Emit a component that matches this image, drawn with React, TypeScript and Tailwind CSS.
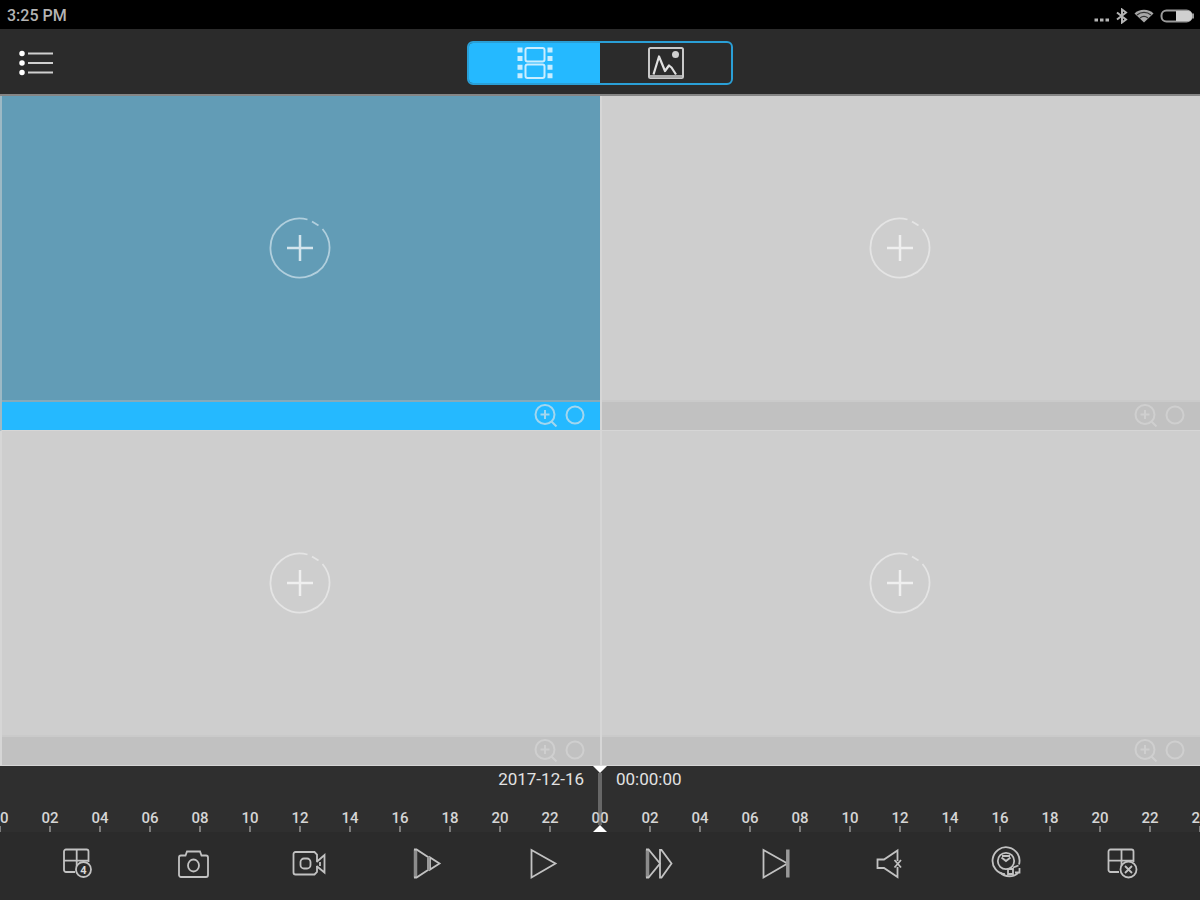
import { useState, ReactNode } from 'react';

// two days, one label every two hours, midnight in the middle
const hours = Array.from({ length: 25 }, (_, i) => (i === 24 ? '24' : String((i * 2) % 24).padStart(2, '0')));

const Glyph = ({ children }: { children: ReactNode }) => (
  <svg viewBox="0 0 40 40" className="w-10 h-10" fill="none" stroke="#c2c2c2" strokeWidth="1.8" aria-hidden="true">
    {children}
  </svg>
);

const tools: { label: string; icon: ReactNode }[] = [
  {
    label: 'Split into 4',
    icon: (
      <>
        <path d="M18 28H9a2 2 0 0 1-2-2V7.5a2 2 0 0 1 2-2h20.500a2 2 0 0 1 2 2V18M19.700 5.500V28M7.500 16.700H31" />
        <circle cx="26.5" cy="25.5" r="7.5" fill="#2b2b2b" />
        <text x="26.5" y="29.5" textAnchor="middle" fontSize="11" fontWeight="700" fill="#d8d8d8" stroke="none">4</text>
      </>
    ),
  },
  {
    label: 'Snapshot',
    icon: (
      <>
        <path d="M8 11.500h4.500l1.500-4h13l1.500 4H33a2 2 0 0 1 2 2V31a2 2 0 0 1-2 2H8a2 2 0 0 1-2-2V13.500a2 2 0 0 1 2-2z" />
        <ellipse cx="20.5" cy="21.5" rx="5.5" ry="6" />
      </>
    ),
  },
  {
    label: 'Record',
    icon: (
      <>
        <path d="M28 17.500V10.500l-2.500-2.500H6.500a2 2 0 0 0-2 2v18.500a2 2 0 0 0 2 2h19l2.500-2.500V22" />
        <rect x="11.5" y="14.5" width="10" height="10" rx="3.5" />
        <path d="M27.500 18l8-7v17.500l-8-6.500M31 18v4" />
      </>
    ),
  },
  {
    label: 'Slow playback',
    icon: (
      <>
        <path d="M9.500 5.500v28" stroke="#8c8c8c" strokeWidth="3.5" />
        <path d="M8 5.500h2.500L22 13v13l-11.500 7.500H8" />
        <path d="M24 13.500v12l9.500-6z" />
        <path d="M22.500 13v13" stroke="#999" strokeWidth="3" />
      </>
    ),
  },
  { label: 'Play', icon: <path d="M9.500 6v27.500l24-14z" /> },
  {
    label: 'Fast playback',
    icon: (
      <>
        <path d="M9.500 5.500v28" stroke="#8c8c8c" strokeWidth="3.5" />
        <path d="M8 5.500h2.500L22 19.500l-11.500 14H8" />
        <path d="M22 6v27.500h1.500l10-14L23.500 6z" />
      </>
    ),
  },
  {
    label: 'Next frame',
    icon: (
      <>
        <path d="M9.500 6v27.500l24-14z" />
        <path d="M33.800 5.500v28" stroke="#999" strokeWidth="3.5" />
      </>
    ),
  },
  {
    label: 'Mute',
    icon: (
      <>
        <path d="M27.500 17V6.500L14 15.500H7.500v8.500H14l13.500 9V23" />
        <path d="M24.500 16l6.500 7.500M31 16l-6.500 7.500" />
      </>
    ),
  },
  {
    label: 'Fisheye',
    icon: (
      <>
        <path d="M18 30.200A13.500 13.500 0 1 1 32 20.500" />
        <circle cx="19" cy="17" r="8.2" />
        <path d="M14.500 13.500l4.500 3.500 4.500-3.500M15 12h8" strokeWidth="2" />
        <path d="M13 28.500c5 5 14 5 18.500 0M26 23.500l5.500-2M32.500 24v4.500H28" />
        <path d="M21 25h5v5h-5z" fill="#2b2b2b" />
      </>
    ),
  },
  {
    label: 'Close all',
    icon: (
      <>
        <path d="M16 28H7.500a2 2 0 0 1-2-2V7.500a2 2 0 0 1 2-2h21a2 2 0 0 1 2 2V18M18.500 5.500V28M5.500 16.700H30" />
        <circle cx="25.5" cy="25.5" r="8" fill="#2b2b2b" />
        <path d="M22 22l7 7M29 22l-7 7" />
      </>
    ),
  },
];

type CameraCellProps = {
  index: number;
  selected: boolean;
  onSelect: () => void;
};

const CameraCell = ({ index, selected, onSelect }: CameraCellProps) => (
  <section
    aria-label={`Channel ${index + 1}`}
    className={`flex flex-col border-l-2 border-b ${selected ? 'bg-[#629cb6] border-l-[#9db9c5] border-b-[#d6d6d6]' : 'bg-[#cecece] border-[#d6d6d6]'}`}
  >
    <button type="button" aria-label="Add camera" onClick={onSelect} className="flex-1 pr-[2px] flex items-center justify-center">
      <svg viewBox="0 0 64 64" className={`w-16 h-16 ${selected ? 'text-[#b1cfdd]' : 'text-[#e4e4e4]'}`} fill="none" stroke="currentColor" strokeWidth="1.8" aria-hidden="true">
        <path d="M39.500 3.500A29.500 29.500 0 1 0 54.500 13M44 5.500l6.500 4" />
        <path d="M32 19v26M19 32h26" stroke={selected ? '#d4e5ed' : '#efefef'} strokeWidth="2.5" />
      </svg>
    </button>
    <div
      className={`h-[30px] border-t-2 pr-[15px] pb-[2px] flex items-center justify-end gap-[7px] ${selected ? 'bg-[#25b9ff] border-[#86aab9] text-[#a3d6ee]' : 'bg-[#c1c1c1] border-[#cacaca] text-[#cfcfcf]'}`}
    >
      <button type="button" aria-label="Zoom in">
        <svg viewBox="0 0 24 24" className="w-6 h-6" fill="none" stroke="currentColor" strokeWidth="2" aria-hidden="true">
          <circle cx="11" cy="11.5" r="9.5" />
          <path d="M17.500 18.500l5 5M11 7v9M6.500 11.500h9" />
        </svg>
      </button>
      <button type="button" aria-label="Record status">
        <svg viewBox="0 0 20 20" className="w-5 h-5" fill="none" stroke="currentColor" strokeWidth="2" aria-hidden="true">
          <circle cx="10" cy="10" r="8.5" />
        </svg>
      </button>
    </div>
  </section>
);

const StatusBar = () => (
  <div className="h-[29px] bg-black flex items-center justify-between pl-[7px] pr-[6px] pt-[2px]">
    <span className="text-[16px] leading-5 font-medium text-[#b4b4b4]">3:25 PM</span>
    <div className="flex items-center gap-[6px] text-[#b4b4b4]">
      <svg viewBox="0 0 16 16" className="w-4 h-4" fill="currentColor" aria-hidden="true">
        <path d="M.5 10.500h3.500v3H.5zM6 10.500h3.500v3H6zM11.500 10.500H15v3h-3.500z" />
      </svg>
      <svg viewBox="0 0 12 16" className="w-3 h-4" fill="none" stroke="currentColor" strokeWidth="2" aria-hidden="true">
        <path d="M1 4.500l9 7-4 3V1.500l4 3-9 7" />
      </svg>
      <svg viewBox="0 0 20 16" className="w-5 h-4" aria-hidden="true">
        <path d="M10 14.500L.5 5.500C5 .5 15 .5 19.500 5.500z" fill="#a8a8a8" />
        <path d="M3 7c4-3.500 10-3.500 14 0M6 10c2.500-2 5.500-2 8 0" stroke="#333" strokeWidth="1.2" fill="none" />
      </svg>
      <svg viewBox="0 0 34 14" className="w-[34px] h-[14px]" aria-hidden="true">
        <rect x="1.5" y="1.5" width="30" height="11" rx="5" fill="none" stroke="#9a9a9a" strokeWidth="2" />
        <path d="M16 2h12a4 4 0 0 1 4 4v2a4 4 0 0 1-4 4H16z" fill="#d0d0d0" />
        <path d="M32 4.500h2v5h-2z" fill="#9a9a9a" />
      </svg>
    </div>
  </div>
);

const App = () => {
  const [mode, setMode] = useState<'video' | 'image'>('video');
  const [selected, setSelected] = useState(0);

  return (
    <div className="min-h-screen flex flex-col bg-[#2b2b2b] font-['Roboto',sans-serif]">
      <StatusBar />

      <header className="h-[67px] pt-[3px] bg-[#2b2b2b] border-b-2 border-[#858585] grid grid-cols-[1fr_auto_1fr] items-center">
        <button type="button" aria-label="Menu" className="ml-4 justify-self-start">
          <svg viewBox="0 0 40 28" className="w-10 h-7" aria-hidden="true">
            <path d="M12 4.500h25M12 14h25M12 23.500h25" stroke="#d0d0d0" strokeWidth="2.2" />
            <path d="M6 4.500h.01M6 14h.01M6 23.500h.01" stroke="#fff" strokeWidth="5.5" strokeLinecap="round" />
          </svg>
        </button>
        <div className="flex w-[266px] h-11 rounded-md border-2 border-[#2a9fd6] overflow-hidden">
          <button
            type="button"
            aria-label="Videos"
            aria-pressed={mode === 'video'}
            onClick={() => setMode('video')}
            className={`flex-1 flex items-center justify-center ${mode === 'video' ? 'bg-[#25b9ff]' : ''}`}
          >
            <svg viewBox="0 0 36 32" className="w-9 h-8" fill="none" stroke="#c9edff" aria-hidden="true">
              <path d="M3 .5v31M33 .5v31" strokeWidth="5" strokeDasharray="5 3.600" />
              <rect x="8.5" y="1" width="19" height="13.5" rx="2" strokeWidth="2" />
              <rect x="8.5" y="17.5" width="19" height="13.5" rx="2" strokeWidth="2" />
            </svg>
          </button>
          <button
            type="button"
            aria-label="Images"
            aria-pressed={mode === 'image'}
            onClick={() => setMode('image')}
            className={`flex-1 flex items-center justify-center ${mode === 'image' ? 'bg-[#25b9ff]' : ''}`}
          >
            <svg viewBox="0 0 36 32" className="w-9 h-8" fill="none" stroke="#c8c8c8" aria-hidden="true">
              <rect x="1" y="1" width="34" height="30" rx="1.5" strokeWidth="2" />
              <path d="M2 29.500h32" strokeWidth="3" stroke="#a8a8a8" />
              <path d="M5.500 27.500L11 9.500l6 14.500 4-5.500 2.500 2 4.500 7" strokeWidth="2.2" stroke="#e0e0e0" strokeLinejoin="round" />
              <circle cx="27.5" cy="7.5" r="3.5" fill="#d0d0d0" stroke="none" />
            </svg>
          </button>
        </div>
      </header>

      <main className="flex-1 grid grid-cols-2 grid-rows-2">
        {[0, 1, 2, 3].map((i) => (
          <CameraCell key={i} index={i} selected={selected === i} onSelect={() => setSelected(i)} />
        ))}
      </main>

      <div className="relative bg-[#2f2f2f] overflow-hidden">
        <div className="grid grid-cols-2 h-11 pt-[3px] text-[17px] leading-5 text-[#e2e2e2]">
          <span className="pr-4 text-right">2017-12-16</span>
          <span className="pl-4">00:00:00</span>
        </div>
        <div className="flex justify-center">
          {[...hours.slice(0, 12), ...hours.slice(0, 12), hours[24]].map((hour, i) => (
            <div key={i} className="w-[50px] shrink-0 flex flex-col items-center">
              <span className="text-[15px] leading-4 font-medium text-[#d6d6d6]">{hour}</span>
              <span className="w-[2px] h-[6px] bg-[#7c7c7c]" />
            </div>
          ))}
        </div>
        {/* playhead */}
        <div className="absolute inset-y-0 left-1/2 -translate-x-1/2 flex flex-col items-center pointer-events-none">
          <svg viewBox="0 0 14 7" className="w-[14px] h-[7px]" aria-hidden="true">
            <path d="M0 0h14L7 7z" fill="#fff" />
          </svg>
          <div className="flex-1 w-[4px] bg-[#a0a0a0]/50" />
          <svg viewBox="0 0 14 7" className="w-[14px] h-[7px]" aria-hidden="true">
            <path d="M0 7h14L7 0z" fill="#fff" />
          </svg>
        </div>
      </div>

      <nav aria-label="Playback controls" className="h-[68px] px-[19px] pb-1 grid grid-cols-10 items-center justify-items-center">
        {tools.map((tool) => (
          <button key={tool.label} type="button" aria-label={tool.label}>
            <Glyph>{tool.icon}</Glyph>
          </button>
        ))}
      </nav>
    </div>
  );
};

export default App;
